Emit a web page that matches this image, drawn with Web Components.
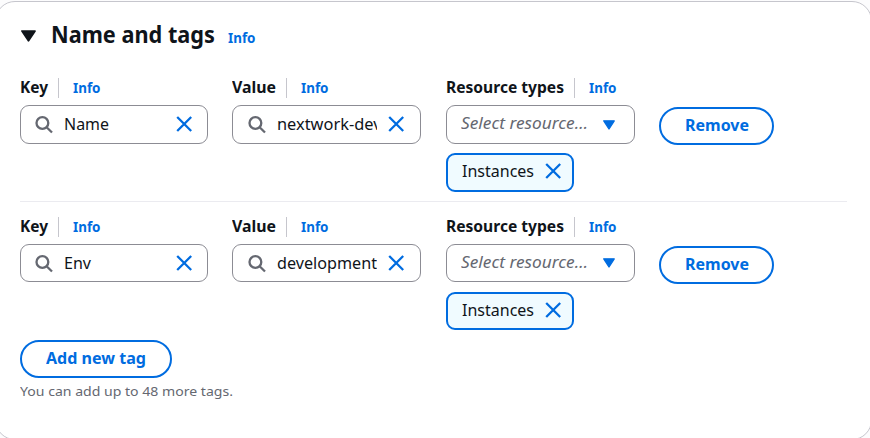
<!DOCTYPE html>
<html lang="en">
<head>
<meta charset="utf-8">
<title>Name and tags</title>
<style>
html, body { margin: 0; height: 438px; overflow: hidden; background: #fcfcfd; }
body { font-family: "Noto Sans", "Open Sans", sans-serif; color: #0f141a; }
</style>
</head>
<body>
<tags-panel></tags-panel>
<script>
const define = (name, html, setup) => {
  const template = document.createElement('template');
  template.innerHTML = html;
  customElements.define(name, class extends HTMLElement {
    connectedCallback() {
      if (this.shadowRoot) return;
      this.attachShadow({ mode: 'open' }).append(template.content.cloneNode(true));
      if (setup) setup(this, this.shadowRoot);
    }
  });
};

define('info-link', `
<style>:host { display: block; font-size: 13.5px; line-height: 20px; font-weight: 700; color: #006ce0; }</style>
<fit-text w="27.5">Info</fit-text>`);

define('search-icon', `
<style>:host { display: block; width: 19px; height: 19px; } svg { display: block; }</style>
<svg width="19" height="19" fill="none" stroke="#656871" stroke-width="2.3"><circle cx="7.4" cy="8" r="5.9"/><path d="M11.6 12.2 17 17.5"/></svg>`);

define('close-icon', `
<style>:host { display: block; width: 16px; height: 16px; } svg { display: block; }</style>
<svg width="16" height="16" fill="none" stroke="#006ce0" stroke-width="2.3"><path d="M1.2 1 15.2 15M15.2 1 1.2 15"/></svg>`);

define('caret-icon', `
<style>:host { display: block; } svg { display: block; width: 100%; height: 100%; }</style>
<svg viewBox="0 0 14 12" preserveAspectRatio="none" fill="currentColor" stroke="currentColor" stroke-width="1.6" stroke-linejoin="round"><path d="M.9 1H13.1L7 10.8Z"/></svg>`);

define('field-label', `
<style>
:host { display: flex; height: 20px; align-items: center; font-size: 16px; line-height: 20px; font-weight: 700; }
i { width: 1px; height: 20px; margin: 2px 14px 0 10px; background: #c6c6cd; }
info-link { margin-top: 2px; }
</style>
<slot></slot><i></i><info-link></info-link>`);

define('search-field', `
<style>
:host { display: flex; box-sizing: border-box; height: var(--field-height, 39px); border: 1px solid #8c8c94; border-radius: 9px; align-items: center; padding: 0 15px 0 14px; background: #fff; font-size: 16px; line-height: 24px; }
:host([slot="value"]) { padding: 0 16px 0 15px; }
div { flex: 1; min-width: 0; overflow: hidden; margin: var(--text-shift, -2px) 11px 0 10px; height: 24px; }
close-icon { margin-top: var(--close-shift, -2px); }
</style>
<search-icon></search-icon><div><slot></slot></div><close-icon></close-icon>`);

define('select-field', `
<style>
:host { display: flex; box-sizing: border-box; height: var(--field-height, 39px); border: 1px solid #8c8c94; border-radius: 9px; align-items: center; justify-content: space-between; padding: 0 19px 0 14px; font-size: 16px; line-height: 22px; font-style: italic; color: #656871; background: #fff; }
fit-text { margin-top: var(--placeholder-shift, -3px); }
caret-icon { width: 12px; height: 10px; color: #006ce0; }
</style>
<fit-text w="127">Select resource…</fit-text><caret-icon></caret-icon>`);

define('tag-token', `
<style>
:host { display: flex; box-sizing: border-box; width: 128px; height: var(--field-height, 39px); border: 2px solid #006ce0; border-radius: 9px; background: #f0fbff; align-items: center; justify-content: space-between; padding: 0 11px 0 14px; font-size: 16px; line-height: 22px; }
::slotted(fit-text) { margin-top: var(--token-shift, -3px); }
close-icon { margin-top: var(--token-shift, -3px); }
</style>
<slot></slot><close-icon></close-icon>`);

define('pill-button', `
<style>
:host { display: flex; box-sizing: border-box; height: 38px; border: 2px solid #006ce0; border-radius: 19px; color: #006ce0; align-items: center; justify-content: center; font-size: 16px; line-height: 22px; font-weight: 700; padding-bottom: 2px; }
</style><slot></slot>`);

define('tag-row', `
<style>
:host { display: grid; grid-template-columns: 188px 189px 189px 115px; column-gap: 24px; align-items: start; }
section { display: flex; flex-direction: column; }
section:nth-of-type(3) { margin-left: 1px; margin-right: -1px; }
field-label { margin-bottom: 8px; }
tag-token { margin-top: var(--token-gap, 9px); }
pill-button { margin-top: 30px; margin-left: 1px; margin-right: -1px; }
</style>
<section><field-label><fit-text w="28">Key</fit-text></field-label><slot name="key"></slot></section>
<section><field-label><fit-text w="44">Value</fit-text></field-label><slot name="value"></slot></section>
<section><field-label><fit-text w="118">Resource types</fit-text></field-label><select-field></select-field>
<tag-token><fit-text w="72">Instances</fit-text></tag-token></section>
<pill-button><fit-text w="64">Remove</fit-text></pill-button>`);

define('tags-panel', `
<style>
:host { display: block; box-sizing: border-box; width: 877px; height: 439px; margin: 1px 0 0 -5px; border: 1px solid #c6c6cd; border-radius: 20px; background: #fff; padding: 18px 24px 0; }
header { display: flex; align-items: center; height: 28px; margin-bottom: 29px; }
caret-icon { width: 15px; height: 12px; margin: 4px 15px 0 1px; }
h2 { margin: 0 13px 0 0; font-size: 23.5px; line-height: 28px; font-weight: 700; }
header info-link { margin-top: 7px; }
hr { border: 0; height: 1px; margin: 9px 0 14px; background: #ebebf0; }
.second { --field-height: 38px; --token-gap: 10px; --text-shift: 0; --placeholder-shift: -2px; --close-shift: 0; --token-shift: -2px; }
.add { width: 152px; margin-top: 10px; }
p { margin: 3px 0 0; font-size: 13px; line-height: 20px; color: #656871; }
</style>
<header><caret-icon></caret-icon><h2><fit-text w="164">Name and tags</fit-text></h2><info-link></info-link></header>
<tag-row><search-field slot="key"><fit-text w="45">Name</fit-text></search-field><search-field slot="value"><fit-text w="104.5">nextwork-dev</fit-text></search-field></tag-row>
<hr>
<tag-row class="second"><search-field slot="key"><fit-text w="27">Env</fit-text></search-field><search-field slot="value"><fit-text w="100">development</fit-text></search-field></tag-row>
<pill-button class="add"><fit-text w="100">Add new tag</fit-text></pill-button>
<p><fit-text w="213">You can add up to 48 more tags.</fit-text></p>`);

// A single line of text condensed or widened to the width in its "w" attribute.
// Registered last, so every instance is already slotted and can be measured.
define('fit-text', `<style>
:host { display: block; flex: none; white-space: nowrap; }
span { display: block; width: max-content; transform-origin: 0 50%; }
</style><span><slot></slot></span>`, (el, root) => {
  const w = +el.getAttribute('w');
  const span = root.querySelector('span');
  el.style.width = w + 'px';
  const natural = span.getBoundingClientRect().width;
  if (natural) span.style.transform = `scaleX(${w / natural})`;
});
</script>
</body>
</html>
